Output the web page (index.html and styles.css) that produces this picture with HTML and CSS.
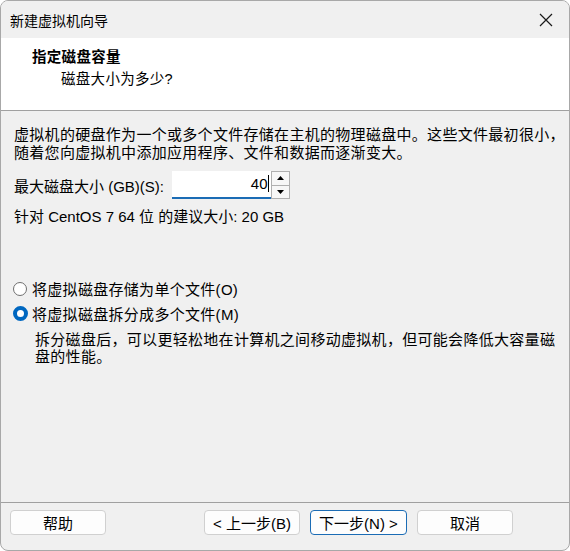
FILE: index.html
```html
<!DOCTYPE html>
<html lang="zh-CN">
<head>
    <meta charset="UTF-8">
    <title>新建虚拟机向导</title>
    <link rel="stylesheet" href="styles.css">
</head>
<body>

    <div class="window">
        <div class="titlebar">
            <span class="title">新建虚拟机向导</span>
            <svg class="close" width="14" height="14" viewBox="0 0 14 14">
                <path d="M1 1 L13 13 M13 1 L1 13" stroke="#1a1a1a" stroke-width="1.2" fill="none"/>
            </svg>
        </div>

        <div class="header">
            <div class="heading">指定磁盘容量</div>
            <div class="subheading">磁盘大小为多少?</div>
        </div>

        <div class="content">
            <p class="intro">虚拟机的硬盘作为一个或多个文件存储在主机的物理磁盘中。这些文件最初很小，<br>随着您向虚拟机中添加应用程序、文件和数据而逐渐变大。</p>

            <div class="size-row">
                <label>最大磁盘大小 (GB)(S):</label>
                <div class="spin">
                    <div class="spin-input">40<span class="caret"></span></div>
                    <div class="spin-buttons">
                        <div class="spin-btn"><svg width="7" height="4" viewBox="0 0 7 4"><path d="M0 4 L3.5 0 L7 4 Z" fill="#000"/></svg></div>
                        <div class="spin-btn"><svg width="7" height="4" viewBox="0 0 7 4"><path d="M0 0 L3.5 4 L7 0 Z" fill="#000"/></svg></div>
                    </div>
                </div>
            </div>

            <p class="hint">针对 CentOS 7 64 位 的建议大小: 20 GB</p>

            <div class="options">
                <div class="radio-row">
                    <span class="radio"></span>
                    <span>将虚拟磁盘存储为单个文件(O)</span>
                </div>
                <div class="radio-row">
                    <span class="radio checked"></span>
                    <span>将虚拟磁盘拆分成多个文件(M)</span>
                </div>
                <p class="note">拆分磁盘后，可以更轻松地在计算机之间移动虚拟机，但可能会降低大容量磁<br>盘的性能。</p>
            </div>
        </div>

        <div class="footer">
            <button class="btn">帮助</button>
            <div class="spacer"></div>
            <button class="btn">&lt; 上一步(B)</button>
            <button class="btn primary">下一步(N) &gt;</button>
            <button class="btn">取消</button>
        </div>
    </div>

</body>
</html>
```

FILE: styles.css
```css
body {
    margin: 0;
    background: #ffffff;
    font-family: "Liberation Sans", "Noto Sans CJK SC", sans-serif;
    font-size: 15px;
    color: #000;
}
.window {
    width: 568px;
    height: 549px;
    border: 1px solid #a8a8a8;
    border-radius: 8px;
    overflow: hidden;
    background: #f0f0f0;
    display: flex;
    flex-direction: column;
}
.titlebar {
    height: 37px;
    background: #f0f0f0;
    display: flex;
    align-items: center;
    justify-content: space-between;
    padding: 0 16px 0 9px;
}
.title {
    font-size: 14px;
}
.header {
    background: #ffffff;
    border-bottom: 1px solid #a0a0a0;
    padding: 8px 0 0 31px;
    box-sizing: border-box;
    height: 73px;
}
.heading {
    font-weight: bold;
    font-size: 14.5px;
    line-height: 22px;
    letter-spacing: 0.3px;
}
.subheading {
    font-size: 14.5px;
    line-height: 22px;
    padding-left: 29px;
    letter-spacing: 0.3px;
}
.content {
    flex: 1;
    padding: 15px 6px 0 13px;
    letter-spacing: 0.3px;
    white-space: nowrap;
}
.intro {
    margin: 0;
    line-height: 18px;
}
.size-row {
    display: flex;
    align-items: center;
    margin-top: 9px;
}
.size-row label {
    width: 158px;
    letter-spacing: 0;
}
.spin {
    display: flex;
}
.spin-input {
    width: 99px;
    height: 28px;
    background: #fff;
    border-bottom: 2px solid #1b6cb5;
    box-sizing: border-box;
    text-align: right;
    line-height: 26px;
    padding-right: 2px;
    font-size: 15px;
}
.caret {
    display: inline-block;
    width: 1px;
    height: 17px;
    background: #000;
    vertical-align: -3px;
}
.spin-buttons {
    display: flex;
    flex-direction: column;
    border: 1px solid #b0b0b0;
    width: 19px;
    height: 28px;
    box-sizing: border-box;
}
.spin-btn {
    flex: 1;
    display: flex;
    align-items: center;
    justify-content: center;
    background: #f7f7f7;
}
.spin-btn + .spin-btn {
    border-top: 1px solid #b0b0b0;
}
.hint {
    margin: 8px 0 0 0;
    line-height: 20px;
    letter-spacing: 0;
}
.options {
    margin-top: 49px;
}
.radio-row {
    display: flex;
    align-items: center;
    height: 25px;
}
.radio {
    width: 14px;
    height: 14px;
    border: 1px solid #6f6f6f;
    border-radius: 50%;
    background: #fff;
    margin-left: -1px;
    margin-right: 5px;
    box-sizing: border-box;
}
.radio.checked {
    border: 4px solid #0067c0;
    width: 15px;
    height: 15px;
    margin-left: -1px;
    margin-right: 4px;
}
.note {
    margin: 5px 0 0 21px;
    line-height: 17px;
}
.footer {
    border-top: 1px solid #a0a0a0;
    display: flex;
    align-items: center;
    padding: 0 56px 8px 9px;
    gap: 10px;
    box-sizing: border-box;
    height: 48px;
}
.spacer {
    flex: 1;
}
.btn {
    height: 25px;
    width: 96px;
    background: #fdfdfd;
    border: 1px solid #d0d0d0;
    border-radius: 4px;
    font-family: "Liberation Sans", "Noto Sans CJK SC", sans-serif;
    font-size: 15px;
    padding: 0;
    color: #000;
}
.btn.primary {
    border: 1px solid #1b6cb5;
    width: 97px;
}
```
